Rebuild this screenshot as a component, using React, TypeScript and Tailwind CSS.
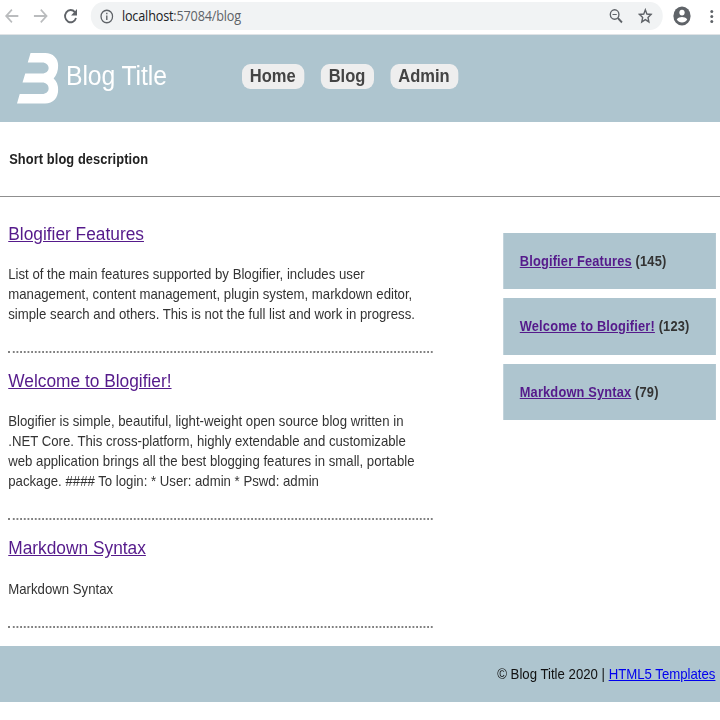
import React from 'react';

const nav = ['Home', 'Blog', 'Admin'];

const popular = [
  { title: 'Blogifier Features', views: 145 },
  { title: 'Welcome to Blogifier!', views: 123 },
  { title: 'Markdown Syntax', views: 79 },
];

const posts = [
  {
    title: 'Blogifier Features',
    lines: [
      'List of the main features supported by Blogifier, includes user',
      'management, content management, plugin system, markdown editor,',
      'simple search and others. This is not the full list and work in progress.',
    ],
  },
  {
    title: 'Welcome to Blogifier!',
    lines: [
      'Blogifier is simple, beautiful, light-weight open source blog written in',
      '.NET Core. This cross-platform, highly extendable and customizable',
      'web application brings all the best blogging features in small, portable',
      'package. #### To login: * User: admin * Pswd: admin',
    ],
  },
  { title: 'Markdown Syntax', lines: ['Markdown Syntax'] },
];

function Toolbar() {
  return (
    <div className="flex h-[35px] items-start border-b border-[#dfe3e6] bg-white">
      <svg className="ml-[4px] mt-[7px] h-[18px] w-[84px] shrink-0" viewBox="0 0 84 18" fill="none">
        <g strokeWidth="1.8" stroke="#babcbe">
          <path d="M16 9H3M9 2.7L2.7 9L9 15.3" />
          <path d="M33 9H46M40.5 2.7L46.8 9L40.5 15.3" />
        </g>
        <path d="M77.7 5.2A6.1 6.1 0 1 0 78.9 11" stroke="#5f6368" strokeWidth="2" />
        <path d="M80 2V8.5H73.5Z" fill="#5f6368" />
      </svg>
      <div className="ml-[11px] mt-[2px] flex h-[28px] w-[624px] shrink-0 items-center rounded-[14px] bg-[#f1f3f4]">
        <svg className="ml-[10px] size-[15px] shrink-0" viewBox="0 0 15 15" fill="none" stroke="#5f6368" strokeWidth="1.4">
          <circle cx="7.5" cy="7.5" r="6.3" />
          <path d="M7.5 6.5V11M7.5 3.8V5.2" strokeWidth="1.5" />
        </svg>
        <span className="ml-[9px] whitespace-nowrap font-['Open_Sans','Noto_Sans',sans-serif] text-[13.8px] tracking-[-0.19px] text-[#202124]">
          localhost<span className="text-[#5f6368]">:57084/blog</span>
        </span>
        <svg className="ml-auto h-[16px] w-[16px]" viewBox="0 0 16 16" fill="none" stroke="#5f6368" strokeWidth="1.5">
          <circle cx="6.5" cy="6.5" r="4.7" />
          <path d="M4.2 6.5H8.8" strokeWidth="1.1" />
          <path d="M10 10L14.5 14.5" strokeWidth="2" />
        </svg>
        <svg className="ml-[16px] mr-[11px] h-[16px] w-[16px]" viewBox="0 0 16 16" fill="none" stroke="#5f6368" strokeWidth="1.5">
          <path d="M8 1.8L9.7 6L14.3 6.4L10.9 9.4L11.9 14L8 11.6L4.1 14L5.1 9.4L1.7 6.4L6.3 6Z" />
        </svg>
      </div>
      <svg className="ml-[11px] mt-[6px] size-[20px] shrink-0" viewBox="0 0 20 20">
        <circle cx="10" cy="10" r="9.4" fill="#5f6368" />
        <circle cx="10" cy="6.6" r="2.9" fill="#fff" />
        <path d="M4.3 13.5C5.5 11.7 8 11 10 11S14.5 11.7 15.7 13.5C14.5 15.3 12.3 16.5 10 16.5S5.5 15.3 4.3 13.5Z" fill="#fff" />
      </svg>
      <svg className="ml-[20px] mt-[8px] h-[16px] w-[5px] shrink-0" viewBox="0 0 5 16" fill="#5f6368">
        <circle cx="2.5" cy="3.5" r="1.6" />
        <circle cx="2.5" cy="8.5" r="1.6" />
        <circle cx="2.5" cy="13.5" r="1.6" />
      </svg>
    </div>
  );
}

function Header() {
  return (
    <header className="flex h-[86.5px] items-start bg-[#aec5cf] pl-[18px]">
      <svg className="mt-[18px] h-[51px] w-[46px] shrink-0" viewBox="16.5 53 42 51" preserveAspectRatio="none" fill="#fff">
        <path d="M30.5 53H45C53 53 58 58.5 58 65.5C58 71 56.5 75 53.5 78.5C56.5 81 58 85 58 89.5C58 98 53 103.5 45 103.5H17L19.7 94H42C46 94 48.5 91.5 48.5 88.5C48.5 85 46 82.5 42 82.5H22.5L25.2 73.5H42C46 73.5 48.5 71 48.5 68C48.5 65 46 62.5 42 62.5H27.7Z" />
      </svg>
      <div className="ml-[8px] mt-[25px] w-[191.5px] shrink-0 whitespace-nowrap text-[27px] leading-[32px] tracking-[-0.1px] text-white">Blog Title</div>
      <nav className="mt-[29px] flex gap-[18px]">
        {nav.map((item) => (
          <a key={item} className="h-[24.5px] rounded-[9px] bg-[#eee] px-[9px] text-[18px] font-bold leading-[25px] text-[#444]">{item}</a>
        ))}
      </nav>
    </header>
  );
}

export default function App() {
  return (
    <div className="h-[720px] w-[720px] overflow-hidden bg-white font-['Liberation_Sans',Arial,sans-serif]">
      <div className="flex h-[720px] w-[786px] origin-top-left scale-x-[0.91667] flex-col">
        <Toolbar />
        <Header />
        <div className="h-[75.5px] border-b border-[#8f8f8f] pl-[10px] pt-[27.5px] text-[14px] font-bold leading-[20px] tracking-[0.1px] text-[#222]">
          Short blog description
        </div>
        <div className="flex h-[449px]">
          <main className="ml-[9px] w-[463px] shrink-0 pt-[24px]">
            {posts.map((post) => (
              <article key={post.title} className="mb-[15px] border-b-2 border-dotted border-[#808080] pb-[27px]">
                <h2 className="mb-[18.2px] text-[18.9px] leading-[25px]">
                  <a className="text-[#551a8b] underline">{post.title}</a>
                </h2>
                <p className="text-[14.4px] leading-[20px] text-[#333]">
                  {post.lines.map((line) => (
                    <span key={line} className="block whitespace-nowrap">{line}</span>
                  ))}
                </p>
              </article>
            ))}
          </main>
          <aside className="ml-[77px] mt-[36px] flex w-[231.5px] flex-col gap-[9px]">
            {popular.map((item) => (
              <div key={item.title} className="h-[56.4px] bg-[#aec5cf] pl-[18px] pt-[18px] text-[14px] font-bold leading-[20px] tracking-[0.18px] text-[#333]">
                <a className="text-[#551a8b] underline">{item.title}</a> ({item.views})
              </div>
            ))}
          </aside>
        </div>
        <footer className="h-[56px] bg-[#aec5cf] pr-[5.5px] pt-[18px] text-right text-[14.4px] leading-[20px] text-[#111]">
          © Blog Title 2020 | <a className="text-[#0000ee] underline">HTML5 Templates</a>
        </footer>
      </div>
    </div>
  );
}
